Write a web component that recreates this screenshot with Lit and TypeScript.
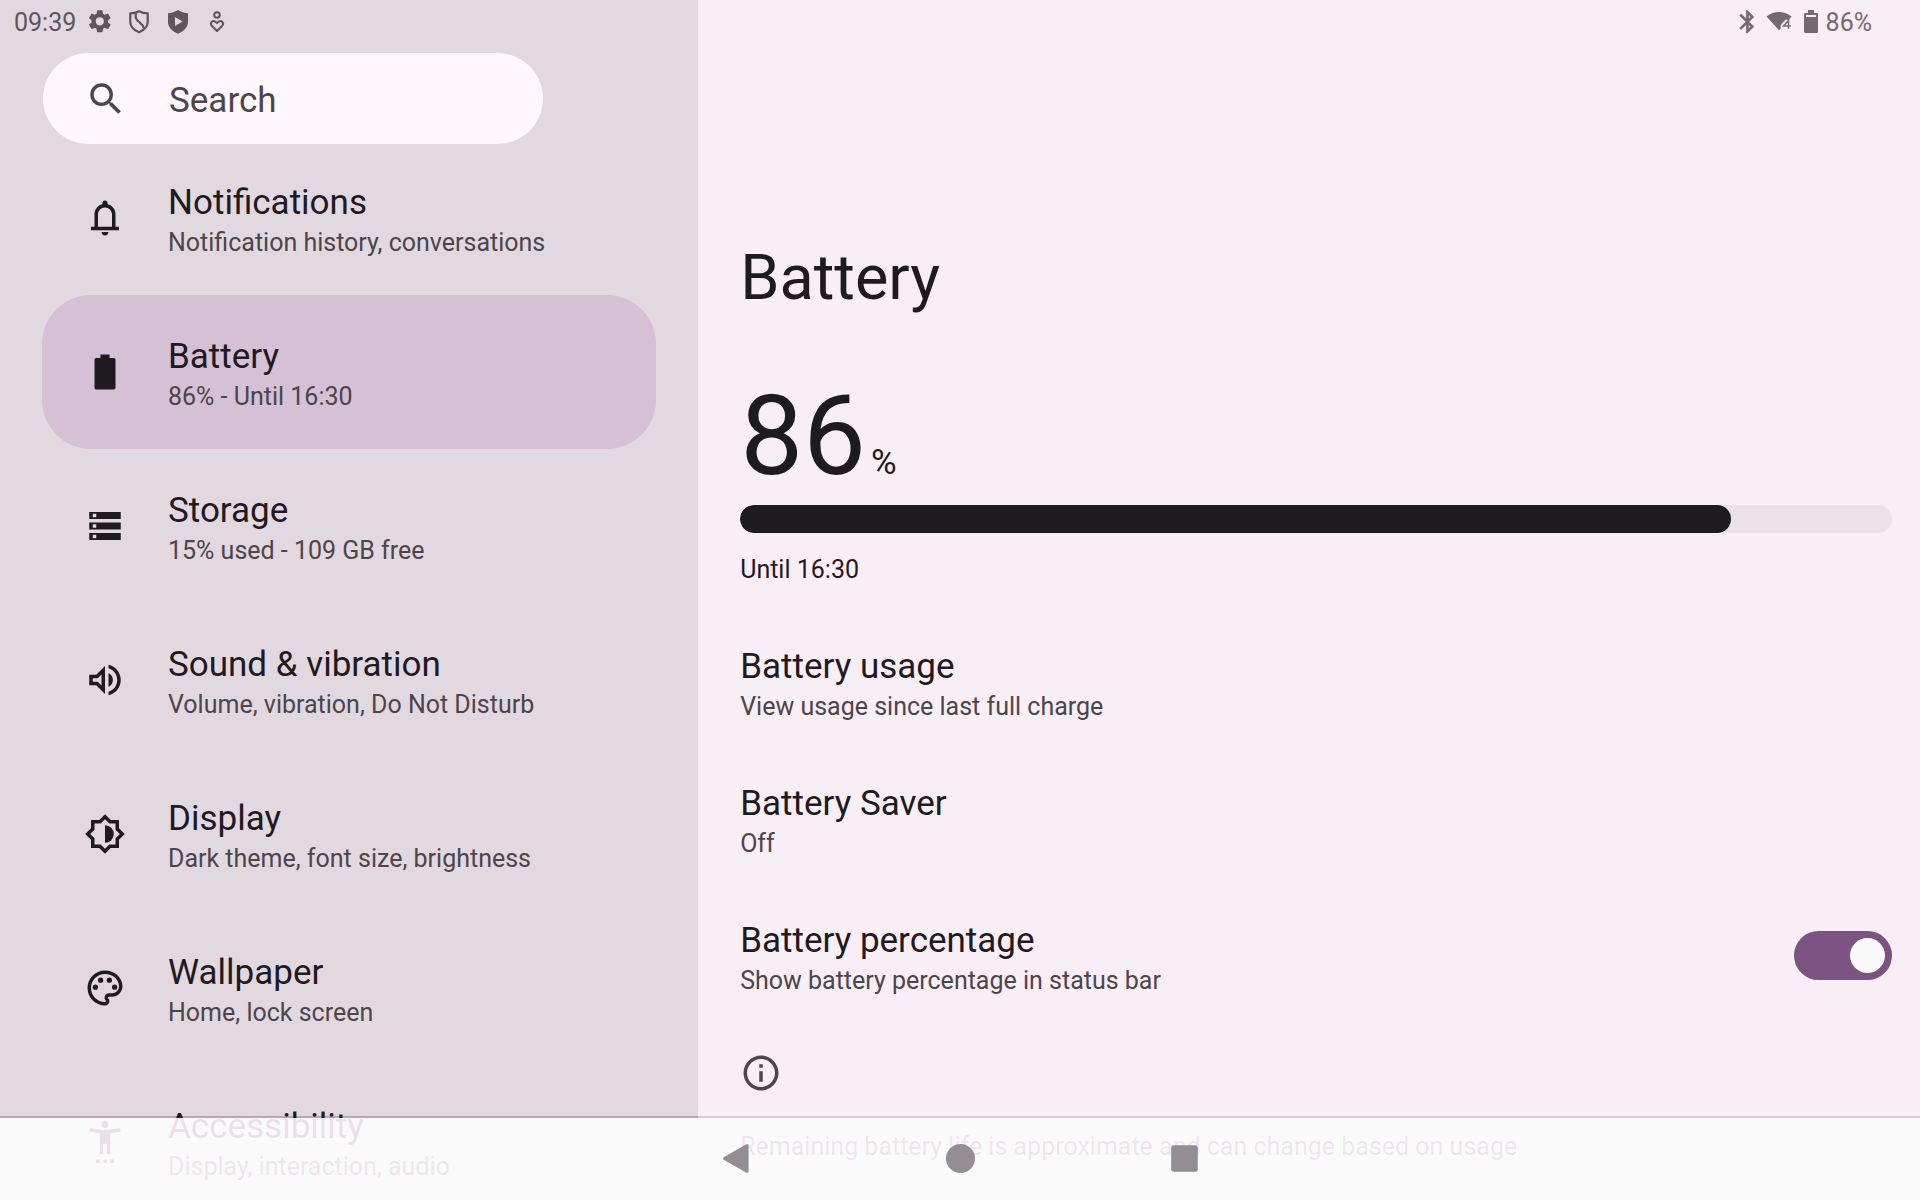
import { LitElement, html, css, svg, nothing } from "lit";
import { customElement, property, state } from "lit/decorators.js";
import { classMap } from "lit/directives/class-map.js";

const ICONS: Record<string, unknown> = {
  search: svg`<path d="M15.5 14h-.79l-.28-.27A6.47 6.47 0 0 0 16 9.5 6.5 6.5 0 1 0 9.5 16c1.61 0 3.09-.59 4.23-1.57l.27.28v.79l5 4.99L20.49 19l-4.99-5zm-6 0C7.01 14 5 11.99 5 9.5S7.01 5 9.5 5 14 7.01 14 9.5 11.99 14 9.5 14z"/>`,
  bell: svg`<path d="M12 22c1.1 0 2-.9 2-2h-4c0 1.1.9 2 2 2zM4 19v-2h2v-7c0-2.8 1.7-5.2 4.5-5.8v-.7c0-.8.7-1.5 1.5-1.5s1.5.7 1.5 1.5v.7C16.3 4.8 18 7.2 18 10v7h2v2zm4-2h8v-7c0-2.2-1.8-4-4-4s-4 1.8-4 4z"/>`,
  battery: svg`<path d="M17 4h-2.400V2H9.400v2H7c-.6 0-1 .4-1 1v16c0 .6.4 1 1 1h10c.6 0 1-.4 1-1V5c0-.6-.4-1-1-1z"/>`,
  storage: svg`<path fill-rule="evenodd" d="M3 4h18v4H3zM5 5v2h2V5zM3 10h18v4H3zM5 11v2h2v-2zM3 16h18v4H3zM5 17v2h2v-2z"/>`,
  sound: svg`<path d="M3 9v6h4l5 5V4L7 9H3zm7-.17v6.34L7.83 13H5v-2h2.83L10 8.830zM16.500 12c0-1.770-1.020-3.290-2.500-4.030v8.050c1.480-.73 2.500-2.250 2.500-4.020zM14 3.230v2.060c2.890.86 5 3.540 5 6.710s-2.110 5.850-5 6.710v2.060c4.010-.91 7-4.490 7-8.770s-2.990-7.860-7-8.770z"/>`,
  display: svg`<path d="M20 8.690V4h-4.690L12 .69 8.690 4H4v4.690L.69 12 4 15.310V20h4.690L12 23.310 15.310 20H20v-4.690L23.310 12 20 8.690zm-2 5.790V18h-3.520L12 20.480 9.520 18H6v-3.520L3.520 12 6 9.520V6h3.520L12 3.520 14.480 6H18v3.520L20.480 12 18 14.480z"/><path d="M12 7v10a5 5 0 0 0 0-10z"/>`,
  palette: svg`<path d="M12 22C6.490 22 2 17.510 2 12S6.490 2 12 2s10 4.040 10 9c0 3.310-2.690 6-6 6h-1.770c-.28 0-.5.22-.5.5 0 .12.05.23.13.33.41.47.64 1.060.64 1.670A2.500 2.500 0 0 1 12 22zm0-18c-4.410 0-8 3.590-8 8s3.590 8 8 8c.28 0 .5-.22.5-.5a.54.54 0 0 0-.14-.35c-.41-.46-.63-1.050-.63-1.650a2.500 2.500 0 0 1 2.500-2.500H16c2.210 0 4-1.790 4-4 0-3.860-3.590-7-8-7z"/><circle cx="6.500" cy="11.500" r="1.500"/><circle cx="9.500" cy="7.500" r="1.500"/><circle cx="14.500" cy="7.500" r="1.500"/><circle cx="17.500" cy="11.500" r="1.500"/>`,
  accessibility: svg`<path d="M20.500 4c-2.610.7-5.670 1-8.500 1S6.110 4.700 3.500 4L3 6c1.860.5 4 .83 6 1v12h2v-6h2v6h2V7c2-.17 4.140-.5 6-1zM12 4a2 2 0 1 0 0-4 2 2 0 0 0 0 4zM7 24h2v-2H7zM11 24h2v-2h-2zM15 24h2v-2h-2z"/>`,
  info: svg`<path d="M11 7h2v2h-2zm0 4h2v6h-2zm1-9C6.480 2 2 6.480 2 12s4.480 10 10 10 10-4.480 10-10S17.520 2 12 2zm0 18c-4.410 0-8-3.590-8-8s3.590-8 8-8 8 3.590 8 8-3.590 8-8 8z"/>`,
  gear: svg`<path transform="translate(-2 -2.500) scale(1.150)" d="M19.140 12.940c.04-.3.06-.61.06-.94 0-.32-.02-.64-.07-.94l2.030-1.580a.49.49 0 0 0 .12-.61l-1.920-3.320a.488.488 0 0 0-.59-.22l-2.390.96c-.5-.38-1.030-.7-1.620-.94l-.36-2.540a.484.484 0 0 0-.48-.41h-3.840c-.24 0-.43.17-.47.41l-.36 2.540c-.59.24-1.130.57-1.620.94l-2.390-.96c-.22-.08-.47 0-.59.22L2.740 8.870c-.12.21-.08.47.12.61l2.030 1.580c-.05.3-.09.63-.09.94s.02.64.07.94l-2.030 1.580a.49.49 0 0 0-.12.61l1.920 3.320c.12.22.37.29.59.22l2.390-.96c.5.38 1.030.7 1.620.94l.36 2.540c.05.24.24.41.48.41h3.840c.24 0 .44-.17.47-.41l.36-2.540c.59-.24 1.130-.56 1.620-.94l2.390.96c.22.08.47 0 .59-.22l1.920-3.320c.12-.22.07-.47-.12-.61zM12 15.600A3.600 3.600 0 1 1 12 8.400a3.600 3.600 0 0 1 0 7.200z"/>`,
  shield: svg`<path fill="none" stroke="currentColor" stroke-width="2.200" stroke-linejoin="round" d="M12 1.200C9 2.700 6 3.300 3.300 3.400V12c0 5 4 8.300 8.700 10.300 4.700-2 8.700-5.300 8.700-10.300V3.400C18 3.300 15 2.700 12 1.200z"/><path fill="none" stroke="currentColor" stroke-width="2.200" d="M9.300 2.800C8 6 8.300 8.500 11 11c3 2.800 5.500 4 6 7.500"/>`,
  playShield: svg`<path fill-rule="evenodd" d="M12 0C9 2 5.500 3 2 3.200V12c0 5.500 4.500 9.300 10 11.700 5.500-2.400 10-6.200 10-11.700V3.200C18.500 3 15 2 12 0zM9 7v9l7.500-4.500z"/>`,
  care: svg`<circle cx="12" cy="5" r="2.800" fill="none" stroke="currentColor" stroke-width="2"/><path fill="none" stroke="currentColor" stroke-width="2" stroke-linejoin="round" d="M12 21l-5.300-5.200c-2.200-2.500.9-6.200 3.800-4L12 13.100l1.500-1.300c2.900-2.200 6 1.500 3.800 4z"/>`,
  bluetooth: svg`<path transform="translate(-1 -1.700) scale(1.120)" d="M17.710 7.710L12 2h-1v7.590L6.410 5 5 6.410 10.590 12 5 17.590 6.410 19 11 14.410V22h1l5.710-5.710-4.300-4.290zM13 5.830l1.880 1.880L13 9.590zm1.880 10.460L13 18.170v-3.760z" stroke="currentColor" stroke-width=".5"/>`,
  wifi: svg`<path d="M-.5 6.500C3.500 3.200 7.500 2 12 2s8.500 1.200 12.500 4.500L22 9.800h-3.500L13.700 15v3.700L12 20.300z"/><path fill="none" stroke="currentColor" stroke-width="1.500" d="M21.500 18.700v-8.300l-5 5.700h7.200"/>`,
  cell: svg`<path fill-rule="evenodd" d="M17.500 3H15V0H9v3H6.500C5.500 3 5 3.500 5 4.500v17c0 .8.500 1.500 1.500 1.500h11c1 0 1.500-.7 1.500-1.500v-17c0-1-.5-1.500-1.500-1.500zM7 5h10v2H7z"/>`,
  back: svg`<path d="M22 1.500v21a1.300 1.300 0 0 1-2.200 1L1.400 13a1.200 1.200 0 0 1 0-2L19.800.5a1.300 1.300 0 0 1 2.200 1z"/>`,
  home: svg`<circle cx="12" cy="12" r="12"/>`,
  recent: svg`<rect x="1" y="1" width="22" height="22" rx="2"/>`,
};

const icon = (name: string) =>
  html`<svg class="icon" viewBox="0 0 24 24" fill="currentColor" aria-hidden="true">${ICONS[name]}</svg>`;

const base = css`
  * {
    box-sizing: border-box;
  }
  .icon {
    display: block;
    flex: none;
    width: 42px;
    height: 42px;
    overflow: visible;
  }
  .label {
    display: flex;
    flex-direction: column;
    min-width: 0;
    padding-top: 2px;
  }
  .title {
    font-size: 35px;
    line-height: 48px;
    color: var(--ink);
  }
  .summary {
    font-size: 25px;
    line-height: 32px;
    color: var(--ink-soft);
  }
`;

interface Entry {
  id: string;
  icon: string;
  title: string;
  summary: string;
}

const ENTRIES: Entry[] = [
  { id: "notifications", icon: "bell", title: "Notifications", summary: "Notification history, conversations" },
  { id: "battery", icon: "battery", title: "Battery", summary: "86% - Until 16:30" },
  { id: "storage", icon: "storage", title: "Storage", summary: "15% used - 109 GB free" },
  { id: "sound", icon: "sound", title: "Sound & vibration", summary: "Volume, vibration, Do Not Disturb" },
  { id: "display", icon: "display", title: "Display", summary: "Dark theme, font size, brightness" },
  { id: "wallpaper", icon: "palette", title: "Wallpaper", summary: "Home, lock screen" },
  { id: "accessibility", icon: "accessibility", title: "Accessibility", summary: "Display, interaction, audio" },
];

@customElement("settings-menu")
class SettingsMenu extends LitElement {
  @state() private selected = "battery";

  static styles = [
    base,
    css`
      :host {
        display: block;
        padding: 0 42px;
        background: var(--side);
        overflow: hidden;
      }
      .status {
        display: flex;
        align-items: center;
        height: 44px;
        margin: 0 -28px;
        font-size: 25px;
        color: var(--status);
      }
      .tray {
        display: flex;
        gap: 15px;
        padding-left: 12px;
      }
      .tray .icon {
        width: 24px;
        height: 24px;
      }
      .search {
        display: flex;
        align-items: center;
        gap: 42px;
        height: 91px;
        margin: 9px 113px 0 1px;
        padding: 0 42px;
        border-radius: 46px;
        background: #fff7fb;
        color: var(--ink-soft);
      }
      .field {
        flex: 1;
        min-width: 0;
        padding: 3px 0 0;
        border: 0;
        outline: 0;
        background: none;
        font: inherit;
        font-size: 35px;
        color: inherit;
      }
      .field::placeholder {
        color: inherit;
        opacity: 1;
      }
      .list {
        margin: -3px 0 0;
        padding: 0;
        list-style: none;
      }
      .entry {
        display: flex;
        align-items: center;
        gap: 42px;
        min-height: 154px;
        padding: 0 42px;
        border-radius: 49px;
        color: var(--ink);
        text-decoration: none;
        white-space: nowrap;
      }
      .current {
        background: #d6c0d6;
      }
    `,
  ];

  private pick(event: Event, id: string) {
    event.preventDefault();
    this.selected = id;
  }

  render() {
    return html`
      <div class="status">
        <span>09:39</span>
        <span class="tray">${["gear", "shield", "playShield", "care"].map(icon)}</span>
      </div>
      <label class="search">
        ${icon("search")}
        <input class="field" type="text" placeholder="Search" aria-label="Search" />
      </label>
      <ul class="list">
        ${ENTRIES.map(
          (entry) => html`<li>
            <a
              href="#${entry.id}"
              class=${classMap({ entry: true, current: entry.id === this.selected })}
              aria-current=${entry.id === this.selected ? "page" : nothing}
              @click=${(event: Event) => this.pick(event, entry.id)}
            >
              ${icon(entry.icon)}
              <span class="label">
                <span class="title">${entry.title}</span>
                <span class="summary">${entry.summary}</span>
              </span>
            </a>
          </li>`
        )}
      </ul>
    `;
  }
}

@customElement("battery-page")
class BatteryPage extends LitElement {
  @property({ type: Number }) level = 86;

  static styles = [
    base,
    css`
      :host {
        display: block;
        padding: 0 28px 0 42px;
        background: var(--page);
        color: var(--ink);
        overflow: hidden;
      }
      .status {
        display: flex;
        align-items: center;
        justify-content: flex-end;
        height: 44px;
        padding-right: 20px;
        font-size: 25px;
        color: #74696f;
      }
      .tray {
        display: flex;
        align-items: center;
        gap: 8px;
        padding-right: 3px;
      }
      .tray .icon {
        width: 24px;
        height: 24px;
      }
      .heading {
        margin: 197px 0 0;
        font-size: 63px;
        line-height: 74px;
        font-weight: 400;
      }
      .level {
        display: flex;
        align-items: baseline;
        gap: 5px;
        margin: 55px 0 3px;
        font-size: 112px;
        line-height: 132px;
      }
      .unit {
        font-size: 35px;
        line-height: 48px;
      }
      .track {
        height: 28px;
        border-radius: 14px;
        background: #ebe1e8;
        overflow: hidden;
      }
      .fill {
        height: 100%;
        border-radius: 14px;
        background: var(--ink);
      }
      .until {
        margin: 19px 0 25px;
        font-size: 25px;
        line-height: 36px;
      }
      .row {
        display: flex;
        align-items: center;
        justify-content: space-between;
        width: 100%;
        min-height: 137px;
        padding: 0;
        border: 0;
        background: none;
        font: inherit;
        text-align: left;
      }
      .toggle {
        appearance: none;
        display: flex;
        align-items: center;
        flex: none;
        width: 98px;
        height: 49px;
        margin: 0;
        padding: 0 7px;
        border-radius: 25px;
        background: #cdc3ca;
      }
      .toggle::before {
        content: "";
        width: 35px;
        height: 35px;
        border-radius: 50%;
        background: #f9f9f9;
      }
      .toggle:checked {
        justify-content: flex-end;
        background: #7c5282;
      }
      .note {
        display: grid;
        gap: 35px;
        margin-top: 28px;
        color: var(--ink-soft);
      }
      .text {
        margin: 0;
        font-size: 25px;
        line-height: 36px;
      }
    `,
  ];

  render() {
    return html`
      <div class="status">
        <span class="tray">${["bluetooth", "wifi", "cell"].map(icon)}</span>
        <span>${this.level}%</span>
      </div>
      <h1 class="heading">Battery</h1>
      <div class="level"><span>${this.level}</span><span class="unit">%</span></div>
      <div class="track" role="progressbar" aria-label="Battery level" aria-valuenow=${this.level}>
        <div class="fill" style="width:${this.level}%"></div>
      </div>
      <p class="until">Until 16:30</p>
      <button class="row" type="button">
        <span class="label">
          <span class="title">Battery usage</span>
          <span class="summary">View usage since last full charge</span>
        </span>
      </button>
      <button class="row" type="button">
        <span class="label">
          <span class="title">Battery Saver</span>
          <span class="summary">Off</span>
        </span>
      </button>
      <div class="row">
        <label class="label" for="percentage">
          <span class="title">Battery percentage</span>
          <span class="summary">Show battery percentage in status bar</span>
        </label>
        <input class="toggle" id="percentage" type="checkbox" role="switch" checked />
      </div>
      <div class="note">
        ${icon("info")}
        <p class="text">Remaining battery life is approximate and can change based on usage</p>
      </div>
    `;
  }
}

@customElement("app-root")
class AppRoot extends LitElement {
  static styles = [
    base,
    css`
      :host {
        --ink: #1f1a1f;
        --ink-soft: #4d444c;
        --status: #5f555d;
        --side: #e2d8df;
        --page: #f8eef6;
        --columns: 4fr 7fr;
        display: grid;
        grid-template-columns: var(--columns);
        position: relative;
        height: 100vh;
        overflow: hidden;
        font-family: Roboto, "Noto Sans", sans-serif;
      }
      /* The navigation bar floats above both panes and lets their text show through faintly. */
      .nav {
        position: absolute;
        inset: auto 0 0;
      }
      .edge {
        display: grid;
        grid-template-columns: var(--columns);
        height: 2px;
      }
      .dark {
        background: rgba(40, 20, 35, 0.24);
      }
      .light {
        background: rgba(90, 45, 80, 0.18);
      }
      .lift,
      .tint {
        position: absolute;
        inset: 2px 0 0;
      }
      .lift {
        backdrop-filter: brightness(1.2);
      }
      .tint {
        background: #ede1ea;
        mix-blend-mode: screen;
      }
      .keys {
        position: relative;
        display: flex;
        justify-content: center;
        gap: 168px;
        height: 82px;
        padding-bottom: 2px;
        background: rgba(0, 0, 0, 0.02);
      }
      .key {
        display: grid;
        place-items: center;
        width: 56px;
        padding: 0;
        border: 0;
        background: none;
        color: #948d92;
      }
      .key .icon {
        width: 29px;
        height: 29px;
      }
    `,
  ];

  render() {
    return html`
      <settings-menu></settings-menu>
      <battery-page></battery-page>
      <nav class="nav">
        <div class="edge"><span class="dark"></span><span class="light"></span></div>
        <div class="lift"></div>
        <div class="tint"></div>
        <div class="keys">
          <button class="key" type="button" aria-label="Back">${icon("back")}</button>
          <button class="key" type="button" aria-label="Home">${icon("home")}</button>
          <button class="key" type="button" aria-label="Recent apps">${icon("recent")}</button>
        </div>
      </nav>
    `;
  }
}
